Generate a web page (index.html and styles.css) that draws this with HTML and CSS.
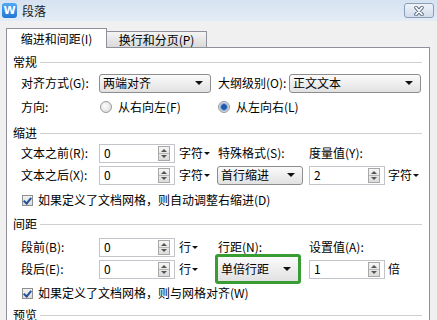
FILE: index.html
```html
<!DOCTYPE html>
<html lang="zh-CN">
<head>
    <meta charset="UTF-8">
    <title>段落</title>
    <link rel="stylesheet" href="styles.css">
</head>
<body>

    <!-- Barre de titre -->
    <div class="titlebar">
        <span class="app-icon">W</span>
        <span class="title">段落</span>
        <button class="close">
            <svg width="14" height="10" viewBox="0 0 14 10">
                <path d="M4 1.5 L10 8.5 M10 1.5 L4 8.5" stroke="#5b6d84" stroke-width="3.6" stroke-linecap="round"/>
                <path d="M4 1.5 L10 8.5 M10 1.5 L4 8.5" stroke="#fff" stroke-width="1.8" stroke-linecap="round"/>
            </svg>
        </button>
    </div>

    <!-- Onglets -->
    <div class="tabs">
        <div class="tab active">缩进和间距(I)</div>
        <div class="tab">换行和分页(P)</div>
    </div>

    <div class="panel">

        <div class="group">常规</div>
        <div class="row r1">
            <span>对齐方式(G):</span>
            <div class="select align">两端对齐<i class="arrow"></i></div>
            <div class="pair">
                <span class="pair-label">大纲级别(O):</span>
                <div class="select fill">正文文本<i class="arrow"></i></div>
            </div>
        </div>
        <div class="row r2">
            <span>方向:</span>
            <label class="radio-opt"><i class="radio"></i>从右向左(F)</label>
            <label class="radio-opt right"><i class="radio on"></i>从左向右(L)</label>
        </div>

        <div class="group gap-top">缩进</div>
        <div class="row first">
            <span>文本之前(R):</span>
            <div class="spin">0<span class="spin-btn"></span></div>
            <span class="unit">字符<i class="caret"></i></span>
            <span>特殊格式(S):</span>
            <span>度量值(Y):</span>
        </div>
        <div class="row">
            <span>文本之后(X):</span>
            <div class="spin">0<span class="spin-btn"></span></div>
            <span class="unit">字符<i class="caret"></i></span>
            <div class="select special">首行缩进<i class="arrow"></i></div>
            <div class="spin">2<span class="spin-btn"></span></div>
            <span class="unit">字符<i class="caret"></i></span>
        </div>
        <div class="check-row first-check">
            <i class="checkbox"></i>如果定义了文档网格，则自动调整右缩进(D)
        </div>

        <div class="group gap-mid">间距</div>
        <div class="row spacing">
            <span>段前(B):</span>
            <div class="spin">0<span class="spin-btn"></span></div>
            <span class="unit">行<i class="caret"></i></span>
            <span>行距(N):</span>
            <span>设置值(A):</span>
        </div>
        <div class="row">
            <span>段后(E):</span>
            <div class="spin">0<span class="spin-btn"></span></div>
            <span class="unit">行<i class="caret"></i></span>
            <div class="highlight">
                <div class="select inner">单倍行距<i class="arrow"></i></div>
            </div>
            <div class="spin">1<span class="spin-btn"></span></div>
            <span class="unit">倍</span>
        </div>
        <div class="check-row second-check">
            <i class="checkbox"></i>如果定义了文档网格，则与网格对齐(W)
        </div>

        <div class="group gap-last">预览</div>
    </div>

</body>
</html>
```

FILE: styles.css
```css
/* Boîte de dialogue "段落" */
body {
    margin: 0;
    width: 437px;
    height: 320px;
    overflow: hidden;
    background-color: #f0f0f0;
    font-family: "Noto Sans CJK SC", "Noto Sans", sans-serif;
    font-size: 12px;
    line-height: 14px;
    color: #000;
}
/* Barre de titre */
.titlebar {
    height: 21px;
    display: flex;
    align-items: center;
    padding-left: 2px;
    background: linear-gradient(#d6e2f1, #e4ecf6);
}
.app-icon {
    width: 15px;
    height: 15px;
    border-radius: 3px;
    background: linear-gradient(#52a8f2, #1f78d6);
    color: #fff;
    font: bold 11px/15px "DejaVu Sans", sans-serif;
    text-align: center;
}
.title {
    margin-left: 5px;
    color: #1e1e1e;
}
.close {
    margin-left: auto;
    margin-right: 3px;
    width: 30px;
    height: 15px;
    padding: 0;
    border: 1px solid #8a9db6;
    border-radius: 3px;
    background: linear-gradient(#eef3f9, #d2dcea);
    display: flex;
    align-items: center;
    justify-content: center;
}
/* Onglets */
.tabs {
    display: flex;
    align-items: flex-end;
    height: 20px;
    margin: 7px 0 0 6px;
}
.tab {
    box-sizing: border-box;
    width: 100px;
    height: 16px;
    margin-bottom: 1px;
    border: 1px solid #8e9199;
    border-left: none;
    border-bottom: none;
    background: linear-gradient(#f4f4f4, #dadada);
    text-align: center;
    line-height: 15px;
}
.tab.active {
    position: relative;
    z-index: 1;
    width: 101px;
    height: 20px;
    margin-bottom: 0;
    border-left: 1px solid #8e9199;
    background: #fff;
    line-height: 19px;
}
/* Panneau */
.panel {
    box-sizing: border-box;
    width: 424px;
    height: 290px;
    margin: -1px 0 0 6px;
    padding-top: 7px;
    border: 1px solid #8e9199;
    background: #fff;
}
.group {
    display: flex;
    align-items: center;
    height: 14px;
    padding-left: 6px;
}
.group::after {
    content: "";
    flex: 1;
    margin: 0 7px 0 3px;
    border-top: 1px solid #cfcfcf;
}
.gap-top { margin-top: 9px; }
.gap-mid { margin-top: 6px; }
.gap-last { margin-top: 4px; }
/* Lignes de formulaire */
.row {
    display: grid;
    grid-template-columns: 78px 78px 41px 91px 77px 35px;
    align-items: center;
    height: 22px;
    padding-left: 14px;
}
.row.r1 { height: 28px; }
.row.r2 { height: 20px; }
.row.first { margin-top: 2px; }
.row.spacing { margin-top: 5px; }
.pair {
    grid-column: 4 / 7;
    display: flex;
    align-items: center;
}
.pair-label { width: 71px; }
/* Listes déroulantes */
.select {
    box-sizing: border-box;
    height: 19px;
    display: flex;
    align-items: center;
    padding-left: 3px;
    border: 1px solid #8d8d8d;
    border-radius: 3px;
    background: linear-gradient(#fbfbfb, #e1e1e1);
}
.select.align {
    grid-column: 2 / 4;
    width: 112px;
}
.select.fill { flex: 1; }
.select.special {
    width: 86px;
    margin-left: -1px;
}
.arrow {
    margin-left: auto;
    margin-right: 7px;
    border-left: 4px solid transparent;
    border-right: 4px solid transparent;
    border-top: 4px solid #111;
}
.highlight {
    box-sizing: border-box;
    width: 86px;
    height: 30px;
    margin: -4px 0 -4px -3px;
    border: 3px solid #3a9d33;
    border-radius: 3px;
}
.select.inner {
    height: 100%;
    border: none;
    border-radius: 0;
}
/* Champs numériques */
.spin {
    box-sizing: border-box;
    width: 76px;
    height: 19px;
    display: flex;
    align-items: center;
    padding-left: 4px;
    border: 1px solid #c2c4c9;
    background: #fff;
}
.spin-btn {
    box-sizing: border-box;
    width: 12px;
    height: 15px;
    margin-left: auto;
    margin-right: 4px;
    border: 1px solid #a8a8a8;
    background:
        linear-gradient(#b7b7b7, #b7b7b7) center / 100% 1px no-repeat,
        linear-gradient(#f5f5f5, #dcdcdc);
    position: relative;
}
.spin-btn::before,
.spin-btn::after {
    content: "";
    position: absolute;
    left: 2px;
    border-left: 3px solid transparent;
    border-right: 3px solid transparent;
}
.spin-btn::before {
    top: 2px;
    border-bottom: 3px solid #555;
}
.spin-btn::after {
    bottom: 2px;
    border-top: 3px solid #555;
}
.unit {
    display: flex;
    align-items: center;
    margin-left: 2px;
}
.caret {
    margin-left: 1px;
    border-left: 3px solid transparent;
    border-right: 3px solid transparent;
    border-top: 3px solid #111;
}
/* Boutons radio */
.radio-opt {
    grid-column: 2 / 4;
    display: flex;
    align-items: center;
    gap: 6px;
    margin-left: 1px;
}
.radio-opt.right {
    grid-column: 4 / 7;
    margin-left: 0;
}
.radio {
    box-sizing: border-box;
    width: 12px;
    height: 12px;
    border: 1px solid #9a9a9a;
    border-radius: 50%;
    background: radial-gradient(circle at 40% 40%, #fdfdfd, #d6d6d6);
}
.radio.on {
    background: radial-gradient(circle, #1e5cab 0 2.5px, #7fa7d8 3.2px, #e4e4e4 5px);
}
/* Cases à cocher */
.check-row {
    display: flex;
    align-items: center;
    gap: 5px;
    height: 22px;
    padding-left: 15px;
}
.first-check { margin-top: 3px; }
.second-check { margin-top: 2px; }
.checkbox {
    box-sizing: border-box;
    width: 11px;
    height: 11px;
    border: 1px solid #8e8f8f;
    background: linear-gradient(#f2f2f2, #dcdcdc);
    position: relative;
}
.checkbox::after {
    content: "";
    position: absolute;
    left: 2px;
    top: 0;
    width: 3px;
    height: 6px;
    border-right: 2px solid #24509a;
    border-bottom: 2px solid #24509a;
    transform: rotate(40deg);
}
```
